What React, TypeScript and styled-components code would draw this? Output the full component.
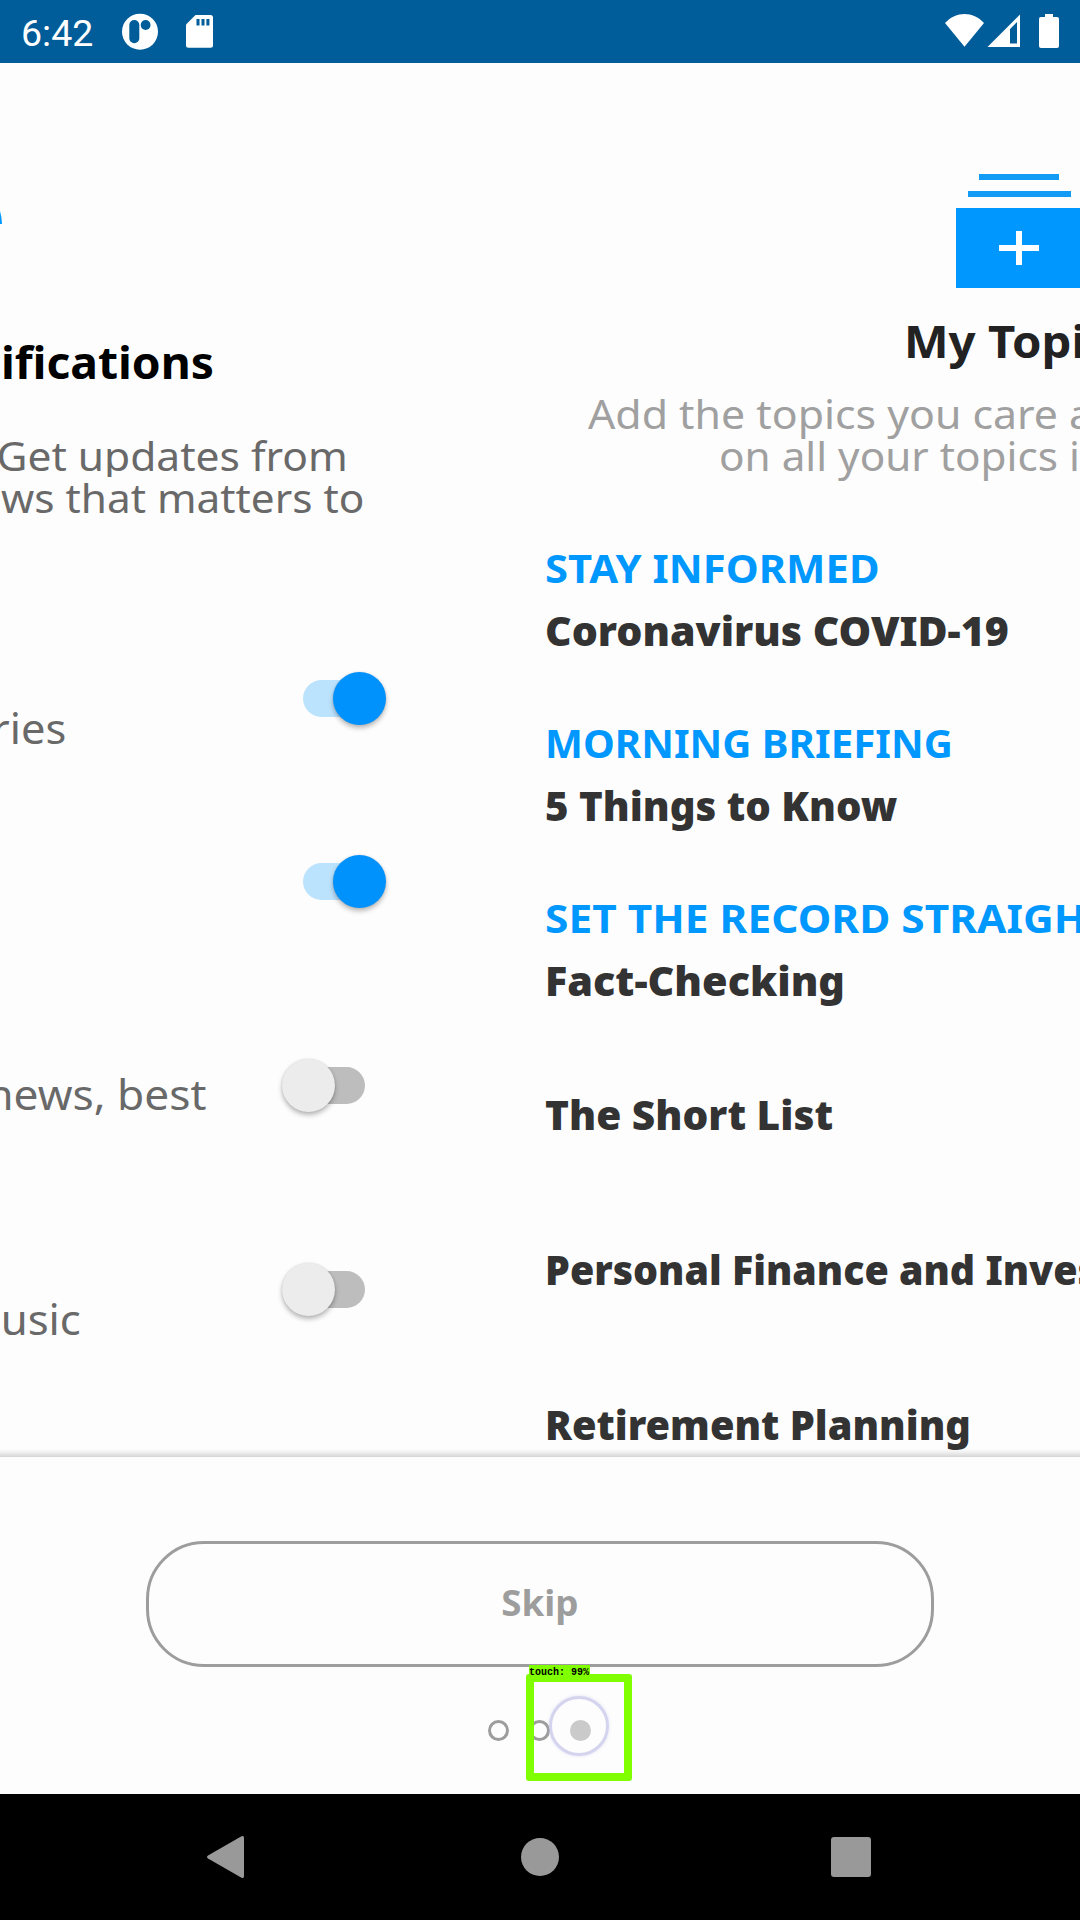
import React from "react";
import styled, { createGlobalStyle } from "styled-components";

const BLUE = "#0098fe";
const STATUS = "#005d99";
const PAPER = "#fdfdfd";

const GlobalStyle = createGlobalStyle`
  * { box-sizing: border-box; }
  body { margin: 0; background: ${PAPER}; }
`;

const Screen = styled.div`
  display: flex;
  flex-direction: column;
  width: 1080px;
  height: 1920px;
  overflow: hidden;
  background: ${PAPER};
  font-family: "Noto Sans", "Open Sans", sans-serif;
`;

const StatusBar = styled.header`
  flex: none;
  display: flex;
  justify-content: space-between;
  height: 63px;
  padding: 0 20px;
  background: ${STATUS};
  color: #fff;
`;

const StatusGroup = styled.div<{ $gap: number }>`
  display: flex;
  align-items: center;
  gap: ${(p) => p.$gap}px;
`;

const Clock = styled.span`
  width: 74px;
  padding: 3px 0 0 1px;
  font: 400 37.5px/60px Roboto, sans-serif;
`;

const Pager = styled.main`
  position: relative;
  flex: none;
  display: flex;
  height: 1394px;
  overflow: hidden;

  &::after {
    content: "";
    position: absolute;
    left: 0;
    right: 0;
    bottom: 0;
    height: 8px;
    background: linear-gradient(rgba(0, 0, 0, 0), rgba(0, 0, 0, 0.05) 40%, rgba(0, 0, 0, 0.16));
  }
`;

const AlertsPage = styled.section`
  flex: none;
  width: 479px;
  padding-top: 148px;
`;

const TopicsPage = styled.section`
  flex: none;
  width: 601px;
  overflow: hidden;
  padding-top: 111px;
`;

const BellEdge = styled.svg`
  display: block;
`;

/* Text that runs off the left edge of the page: $end is its right side. */
const Trailing = styled.div<{ $end: number; $stretch: number }>`
  display: flex;
  justify-content: flex-end;
  width: ${(p) => p.$end}px;
  overflow: hidden;
  white-space: nowrap;
  transform: scaleX(${(p) => p.$stretch});
  transform-origin: right;
`;

/* Text that starts inside the page and grows to the right. */
const Leading = styled.div<{ $stretch: number }>`
  white-space: nowrap;
  transform: scaleX(${(p) => p.$stretch});
  transform-origin: left;
`;

const AlertsTitle = styled(Trailing)`
  margin-top: 108px;
  color: #000;
  font-size: 45px;
  font-weight: 700;
  line-height: 60px;
`;

const AlertsIntro = styled.div`
  margin: 43px 0 153px;
`;

const IntroLine = styled(Trailing)`
  color: #696969;
  font-size: 40px;
  line-height: 42px;
`;

const Setting = styled.div<{ $height: number }>`
  display: flex;
  justify-content: space-between;
  align-items: flex-start;
  width: 386px;
  height: ${(p) => p.$height}px;
`;

const SettingText = styled(Trailing)<{ $drop: number }>`
  margin-top: ${(p) => p.$drop}px;
  color: #696969;
  font-size: 41px;
  line-height: 42px;
`;

const SwitchTrack = styled.div<{ $on: boolean }>`
  display: flex;
  align-items: center;
  justify-content: ${(p) => (p.$on ? "flex-end" : "flex-start")};
  width: 62px;
  height: 37px;
  margin: 8px 21px 8px auto;
  border-radius: 19px;
  background: ${(p) => (p.$on ? "#bce3fe" : "#bdbdbd")};
`;

const SwitchThumb = styled.div<{ $on: boolean }>`
  flex: none;
  width: 53px;
  height: 53px;
  margin: 0 -21px;
  border-radius: 50%;
  background: ${(p) => (p.$on ? "#0092fc" : "#ececec")};
  box-shadow: 0 3px 5px rgba(0, 0, 0, 0.28), 0 0 2px rgba(0, 0, 0, 0.12);
`;

const StackIcon = styled.div`
  display: flex;
  flex-direction: column;
  align-items: center;
  width: 126px;
  margin-left: 477px;
`;

const StackLine = styled.div<{ $width: number; $below: number }>`
  width: ${(p) => p.$width}px;
  height: 6px;
  margin-bottom: ${(p) => p.$below}px;
  background: #129cf6;
`;

const StackCard = styled.div`
  display: flex;
  align-items: center;
  justify-content: center;
  width: 126px;
  height: 80px;
  background: ${BLUE};
`;

const TopicsTitle = styled(Leading)`
  margin: 22px 0 23px 424.5px;
  color: #222;
  font-size: 45.5px;
  font-weight: 700;
  line-height: 60px;
`;

const TopicsIntro = styled.div`
  margin-bottom: 70px;
`;

const TopicsIntroLine = styled(Leading)<{ $indent: number }>`
  margin-left: ${(p) => p.$indent}px;
  color: #a0a0a0;
  font-size: 40px;
  line-height: 42px;
`;

const TopicItem = styled.article<{ $after: number }>`
  margin: 0 0 ${(p) => p.$after}px 66px;
`;

const TopicLabel = styled(Leading)`
  margin-bottom: 21px;
  color: ${BLUE};
  font-size: 40px;
  font-weight: 700;
  line-height: 42px;
`;

const TopicName = styled(Leading)`
  color: #333;
  font-size: 40px;
  font-weight: 900;
  line-height: 42px;
`;

const Footer = styled.footer`
  flex: none;
  display: flex;
  flex-direction: column;
  align-items: center;
  height: 337px;
  padding-top: 84px;
`;

const SkipButton = styled.button`
  width: 788px;
  height: 126px;
  padding: 0 0 2px;
  border: 3px solid #9d9d9d;
  border-radius: 58px;
  background: transparent;
  color: #9d9d9d;
  font: 700 35px/50px "Noto Sans", sans-serif;
`;

const SkipText = styled.span`
  display: inline-block;
  transform: scaleX(1.05);
`;

const Dots = styled.div`
  position: relative;
  display: flex;
  gap: 20px;
  width: 104px;
  margin-top: 53px;
`;

const Dot = styled.span<{ $active?: boolean }>`
  width: 21px;
  height: 21px;
  border: 3px solid ${(p) => (p.$active ? "#cacaca" : "#9d9d9d")};
  border-radius: 50%;
  background: ${(p) => (p.$active ? "#cacaca" : "transparent")};
`;

const TouchRing = styled.span`
  position: absolute;
  left: 61px;
  top: -24px;
  width: 60px;
  height: 60px;
  border: 3px solid rgba(190, 190, 230, 0.65);
  border-radius: 50%;
  box-shadow: 0 0 3px rgba(190, 190, 240, 0.5);
`;

const TouchBox = styled.div`
  position: absolute;
  left: 38px;
  top: -46px;
  width: 106px;
  height: 107px;
  border: 8px solid #80ff00;
  border-radius: 3px;
`;

const TouchLabel = styled.span`
  position: absolute;
  left: -5px;
  top: -17px;
  width: 61px;
  height: 12px;
  background: #80ff00;
  color: #000;
  font: 700 10px/15px "Liberation Mono", monospace;
  white-space: nowrap;
`;

const NavBar = styled.nav`
  flex: none;
  display: grid;
  grid-template-columns: 458px 164px 458px;
  place-items: center;
  height: 126px;
  background: #000;
`;

type SettingData = { text?: string; end: number; stretch: number; drop: number; on: boolean; height: number };

const settings: SettingData[] = [
  { text: "ries", end: 66.3, stretch: 1.06, drop: 34.5, on: true, height: 183 },
  { end: 0, stretch: 1, drop: 0, on: true, height: 204 },
  { text: "news, best", end: 206.5, stretch: 1.08, drop: 13.5, on: false, height: 204 },
  { text: "usic", end: 80.8, stretch: 1.065, drop: 34.5, on: false, height: 120 },
];

type Topic = { label?: string; labelStretch?: number; name: string; stretch: number; after: number };

const topics: Topic[] = [
  { label: "STAY INFORMED", labelStretch: 1.044, name: "Coronavirus COVID-19", stretch: 1.027, after: 70 },
  { label: "MORNING BRIEFING", labelStretch: 1.006, name: "5 Things to Know", stretch: 1.005, after: 70 },
  { label: "SET THE RECORD STRAIGH", labelStretch: 1.062, name: "Fact-Checking", stretch: 1.034, after: 92 },
  { name: "The Short List", stretch: 1.015, after: 113 },
  { name: "Personal Finance and Inves", stretch: 0.984, after: 113 },
  { name: "Retirement Planning", stretch: 0.994, after: 0 },
];

function Switch({ on }: { on: boolean }) {
  return (
    <SwitchTrack $on={on} role="switch" aria-checked={on}>
      <SwitchThumb $on={on} />
    </SwitchTrack>
  );
}

export default function App() {
  return (
    <Screen>
      <GlobalStyle />
      <StatusBar>
        <StatusGroup $gap={27}>
          <Clock>6:42</Clock>
          <svg width="38" height="63" viewBox="0 0 38 63">
            <circle cx="19" cy="31.7" r="18" fill="#fff" />
            <rect x="8.3" y="20" width="10" height="23.3" rx="5" fill={STATUS} />
            <circle cx="24.6" cy="25" r="4.9" fill={STATUS} />
          </svg>
          <svg width="28" height="63" viewBox="0 0 28 63">
            <path d="M9.5 15H24.5a2.5 2.5 0 0 1 2.5 2.5V45.2a2.5 2.5 0 0 1-2.5 2.5H2.5A2.5 2.5 0 0 1 0 45.2V24.5z" fill="#fff" />
            <path d="M10.5 19h3v6.5h-3zM15.5 19h3v6.5h-3zM20.4 19h3v6.5h-3z" fill={STATUS} />
          </svg>
        </StatusGroup>
        <StatusGroup $gap={0}>
          <svg width="116" height="63" viewBox="944 0 116 63">
            <path d="M945 23C956 11 973 11 984 23L964.5 46.7z" fill="#fff" />
            <path fillRule="evenodd" d="M987.5 47L1020 14.5V47zM1010 29V43.5H1017V22z" fill="#fff" />
            <path d="M1045 14h8v3h4a2 2 0 0 1 2 2v27a2 2 0 0 1-2 2h-16a2 2 0 0 1-2-2V19a2 2 0 0 1 2-2h4z" fill="#fff" />
          </svg>
        </StatusGroup>
      </StatusBar>

      <Pager>
        <AlertsPage>
          <BellEdge width="3" height="13" viewBox="0 0 3 13">
            <path d="M0 0Q1.6 5 2 13H0z" fill={BLUE} />
          </BellEdge>
          <AlertsTitle $end={214} $stretch={1.027}>tifications</AlertsTitle>
          <AlertsIntro>
            <IntroLine $end={347.8} $stretch={1.063}>Get updates from</IntroLine>
            <IntroLine $end={364.3} $stretch={1.058}>ws that matters to</IntroLine>
          </AlertsIntro>
          {settings.map((s, i) => (
            <Setting key={i} $height={s.height}>
              {s.text && (
                <SettingText $end={s.end} $stretch={s.stretch} $drop={s.drop}>
                  {s.text}
                </SettingText>
              )}
              <Switch on={s.on} />
            </Setting>
          ))}
        </AlertsPage>

        <TopicsPage>
          <StackIcon>
            <StackLine $width={80} $below={11} />
            <StackLine $width={103} $below={11} />
            <StackCard>
              <svg width="40" height="34" viewBox="0 0 40 34">
                <path d="M17 0h6v14h17v6H23v14h-6V20H0v-6h17z" fill="#fff" />
              </svg>
            </StackCard>
          </StackIcon>
          <TopicsTitle as="h1" $stretch={1.04}>My Topi</TopicsTitle>
          <TopicsIntro>
            <TopicsIntroLine $indent={109} $stretch={1.07}>Add the topics you care a</TopicsIntroLine>
            <TopicsIntroLine $indent={240} $stretch={1.056}>on all your topics i</TopicsIntroLine>
          </TopicsIntro>
          {topics.map((t) => (
            <TopicItem key={t.name} $after={t.after}>
              {t.label && <TopicLabel $stretch={t.labelStretch ?? 1}>{t.label}</TopicLabel>}
              <TopicName $stretch={t.stretch}>{t.name}</TopicName>
            </TopicItem>
          ))}
        </TopicsPage>
      </Pager>

      <Footer>
        <SkipButton>
          <SkipText>Skip</SkipText>
        </SkipButton>
        <Dots>
          <Dot />
          <Dot />
          <Dot $active />
          <TouchRing />
          <TouchBox>
            <TouchLabel>touch: 99%</TouchLabel>
          </TouchBox>
        </Dots>
      </Footer>

      <NavBar>
        <svg width="46" height="44" viewBox="0 0 46 44">
          <path d="M2 20.5L35.5 1.3Q38 0 38 3V41Q38 44 35.5 42.7L2 23.5Q0 22 2 20.5z" fill="#999" />
        </svg>
        <svg width="38" height="38" viewBox="0 0 38 38">
          <circle cx="19" cy="19" r="19" fill="#999" />
        </svg>
        <svg width="40" height="40" viewBox="0 0 40 40">
          <rect width="40" height="40" rx="3" fill="#999" />
        </svg>
      </NavBar>
    </Screen>
  );
}
